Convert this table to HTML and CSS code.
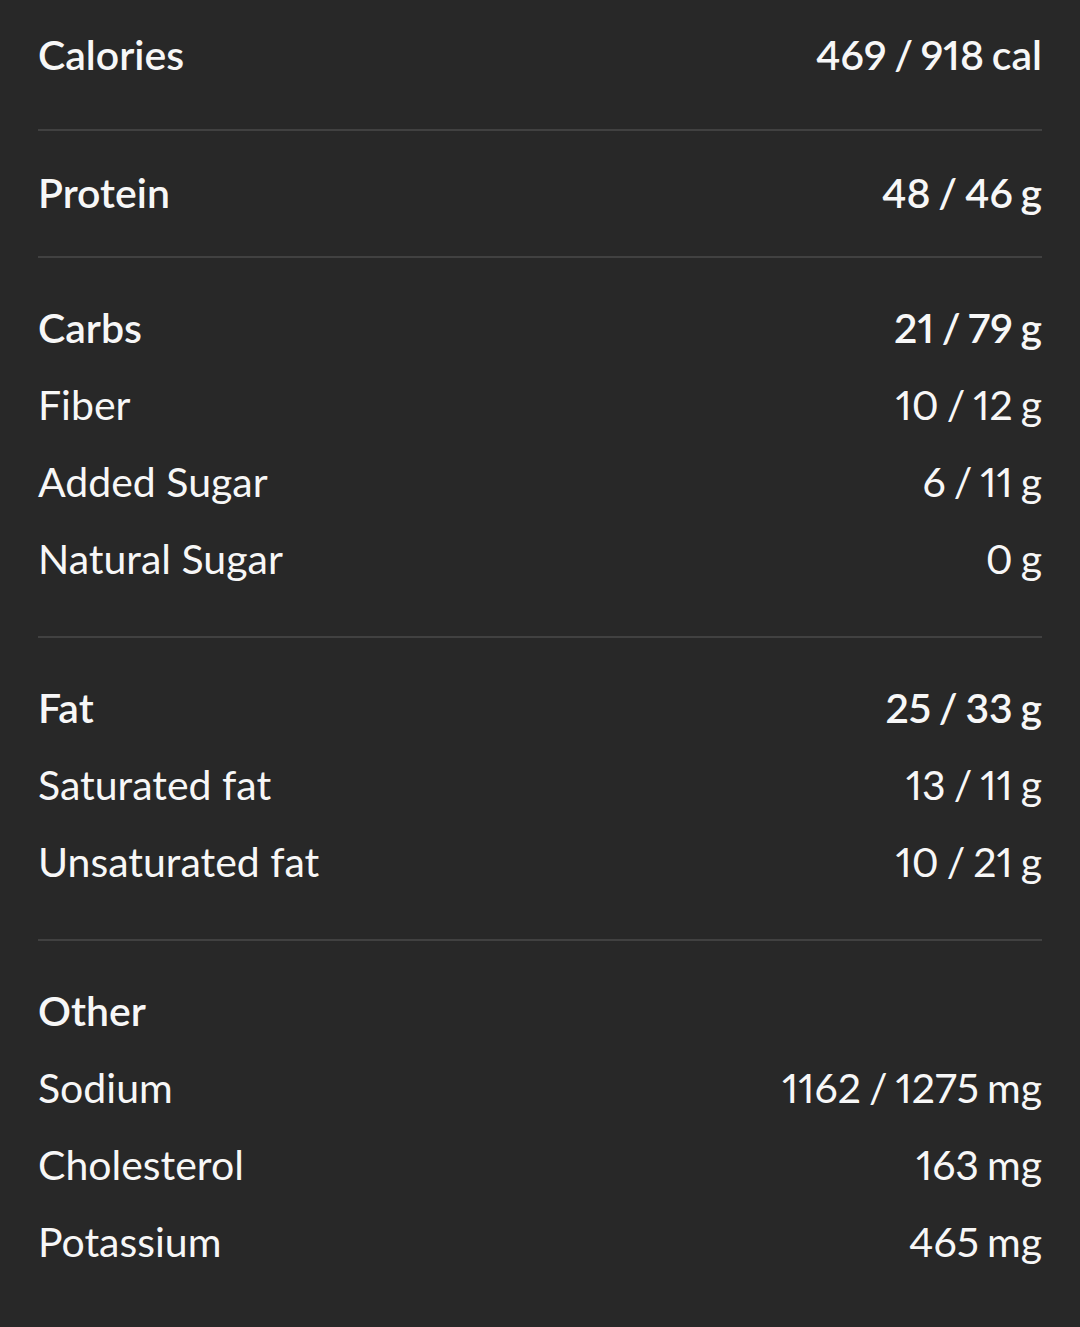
FILE: index.html
```html
<!DOCTYPE html>
<html lang="en">
<head>
<meta charset="utf-8">
<title>Nutrition</title>
<link rel="stylesheet" href="styles.css">
</head>
<body>
<main class="panel">
  <section class="section first">
    <div class="row head"><span>Calories</span><span class="val">469 / 918 cal</span></div>
  </section>
  <section class="section single">
    <div class="row head"><span>Protein</span><span class="val">48 / 46 g</span></div>
  </section>
  <section class="section">
    <div class="row head"><span>Carbs</span><span class="val">21 / 79 g</span></div>
    <div class="row"><span>Fiber</span><span class="val">10 / 12 g</span></div>
    <div class="row"><span>Added Sugar</span><span class="val">6 / 11 g</span></div>
    <div class="row"><span>Natural Sugar</span><span class="val">0 g</span></div>
  </section>
  <section class="section">
    <div class="row head"><span>Fat</span><span class="val">25 / 33 g</span></div>
    <div class="row"><span>Saturated fat</span><span class="val">13 / 11 g</span></div>
    <div class="row"><span>Unsaturated fat</span><span class="val">10 / 21 g</span></div>
  </section>
  <section class="section last">
    <div class="row head"><span>Other</span></div>
    <div class="row"><span>Sodium</span><span class="val">1162 / 1275 mg</span></div>
    <div class="row"><span>Cholesterol</span><span class="val">163 mg</span></div>
    <div class="row"><span>Potassium</span><span class="val">465 mg</span></div>
  </section>
</main>
</body>
</html>
```
FILE: styles.css
```css
html, body {
  margin: 0;
  padding: 0;
  background: #282828;
}
body {
  font-family: Lato, "Noto Sans", sans-serif;
  color: #f7f7f7;
  width: 1080px;
  height: 1327px;
  overflow: hidden;
}
.panel {
  padding: 0 38px;
}
.section {
  padding: 31px 0 39px;
  border-bottom: 2px solid #414141;
}
.section.first {
  padding: 16px 0 36px;
}
.section.single {
  padding: 23px 0 25px;
}
.section.last {
  border-bottom: none;
}
.row {
  display: flex;
  justify-content: space-between;
  align-items: center;
  height: 77px;
  font-size: 41px;
  font-weight: 400;
  line-height: 77px;
}
.row.head {
  font-weight: 600;
}
.val {
  font-variant-numeric: proportional-nums;
  word-spacing: -2.5px;
}
```
